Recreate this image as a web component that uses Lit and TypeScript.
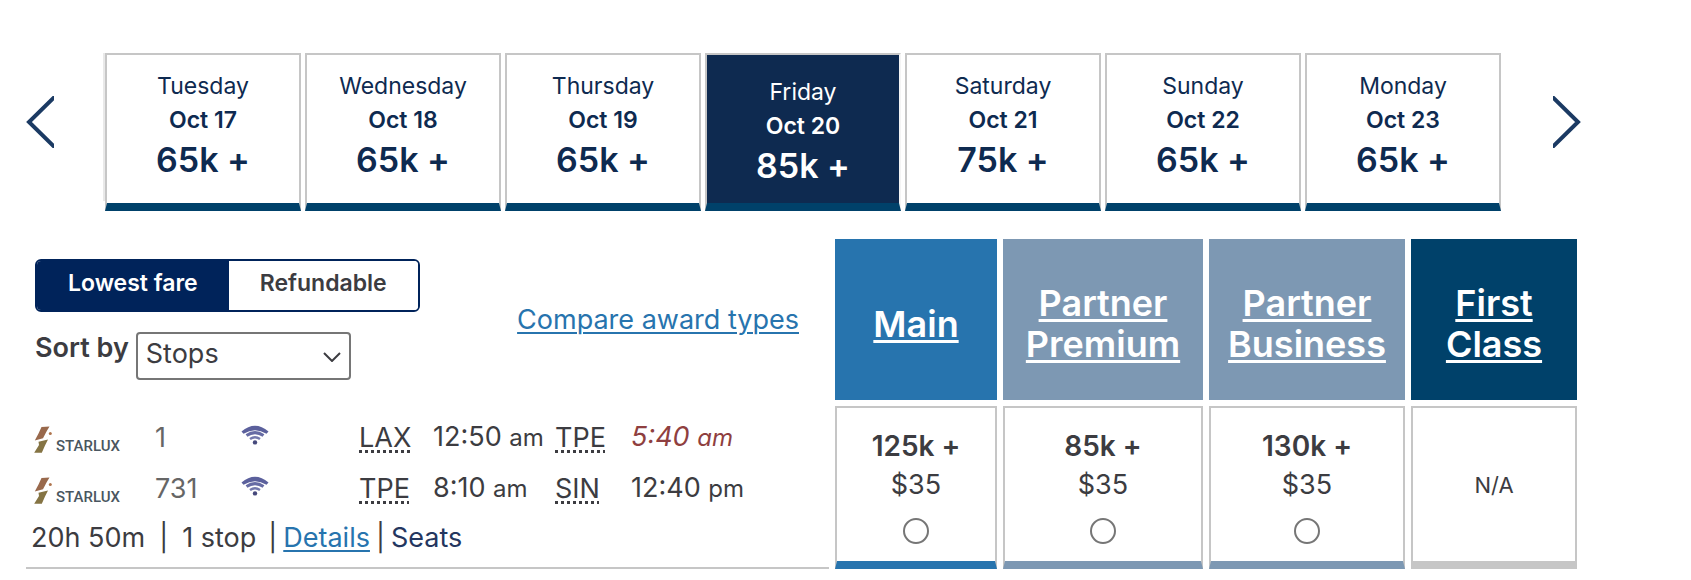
import { LitElement, html, css, svg } from "lit";
import { customElement, property, state } from "lit/decorators.js";
import { classMap } from "lit/directives/class-map.js";

interface Day { name: string; date: string; miles: string }
interface Fare { id: string; lines: string[]; miles?: string; fee?: string }
interface Stop { code: string; time: string; half: string; late?: boolean }
interface Segment { flight: string; from: Stop; to: Stop }

const DAYS: Day[] = [
  { name: "Tuesday", date: "Oct 17", miles: "65k +" },
  { name: "Wednesday", date: "Oct 18", miles: "65k +" },
  { name: "Thursday", date: "Oct 19", miles: "65k +" },
  { name: "Friday", date: "Oct 20", miles: "85k +" },
  { name: "Saturday", date: "Oct 21", miles: "75k +" },
  { name: "Sunday", date: "Oct 22", miles: "65k +" },
  { name: "Monday", date: "Oct 23", miles: "65k +" },
];

const FARES: Fare[] = [
  { id: "main", lines: ["Main"], miles: "125k +", fee: "$35" },
  { id: "premium", lines: ["Partner", "Premium"], miles: "85k +", fee: "$35" },
  { id: "business", lines: ["Partner", "Business"], miles: "130k +", fee: "$35" },
  { id: "first", lines: ["First", "Class"] },
];

const SEGMENTS: Segment[] = [
  {
    flight: "1",
    from: { code: "LAX", time: "12:50", half: "am" },
    to: { code: "TPE", time: "5:40", half: "am", late: true },
  },
  {
    flight: "731",
    from: { code: "TPE", time: "8:10", half: "am" },
    to: { code: "SIN", time: "12:40", half: "pm" },
  },
];

@customElement("day-strip")
class DayStrip extends LitElement {
  @property({ type: Number }) selected = 3;

  static styles = css`
    :host { display: flex; align-items: stretch; gap: 49px; }
    button { font: inherit; color: inherit; cursor: pointer; border-radius: 0; }
    .arrow { flex: none; display: flex; align-items: center; border: 0; background: none; padding: 0 0 20px; }
    .arrow svg { display: block; width: 28px; height: 52px; fill: none; stroke: #1b3a63; stroke-width: 4; }
    .days {
      flex: 1; display: grid; grid-template-columns: repeat(7, minmax(0, 1fr)); gap: 4px;
      margin: 0 3px 0 0; padding: 0 0 0 2px; list-style: none;
      background: linear-gradient(#e9e9e9, #e9e9e9) 0 0 / 2px 148px no-repeat;
    }
    .day {
      box-sizing: border-box; width: 100%; height: 158px; padding: 14px 0 0;
      display: flex; flex-direction: column; align-items: center;
      background: #fff; border: 2px solid #c6c6c6; border-bottom: 8px solid #00416a;
      color: #0e2a50; font-size: 23px; line-height: 34px;
    }
    .day.on { background: #0e2a50; color: #fff; padding-top: 20px; border-right-color: #f4f4f4; }
    .date { font-weight: 600; }
    .miles { font-size: 34px; line-height: 46px; font-weight: 600; }
  `;

  render() {
    return html`
      <button class="arrow" aria-label="Earlier dates">
        <svg viewBox="0 0 28 52"><path d="M29 0.5 3 26 29 51.5" /></svg>
      </button>
      <ul class="days">
        ${DAYS.map((d, i) => html`<li>
          <button class=${classMap({ day: true, on: i === this.selected })}
            aria-pressed=${i === this.selected ? "true" : "false"} @click=${() => (this.selected = i)}>
            <span>${d.name}</span><span class="date">${d.date}</span><span class="miles">${d.miles}</span>
          </button></li>`)}
      </ul>
      <button class="arrow" aria-label="Later dates">
        <svg viewBox="0 0 28 52"><path d="M-1 0.5 25 26 -1 51.5" /></svg>
      </button>`;
  }
}

const wifi = svg`<svg class="wifi" viewBox="0 0 28 20" role="img" aria-label="Wi-Fi available">
  <path d="M0.5 6.5Q14 -5 27.5 6.5L25.5 8.8Q14 1.8 2.5 8.8Z" fill="#5b609c" />
  <path d="M5.5 10.6Q14 4.6 22.5 10.6" fill="none" stroke="#666ba4" stroke-width="3" />
  <path d="M9 14Q14 10.4 19 14" fill="none" stroke="#7479ad" stroke-width="2.4" />
  <circle cx="14" cy="17.4" r="2.2" fill="#46497c" /></svg>`;

const mark = svg`<svg class="mark" viewBox="0 0 18 27" aria-hidden="true">
  <path d="M7.5 1 15.5 0.5 12.8 5 9 12.2 0.8 14.5 4.5 7.5Z" fill="#99694c" />
  <path d="M4.5 15.8 14 13.5 11 19.5 7.8 26.8 0.2 26.8 5 19Z" fill="#857444" />
  <circle cx="16.3" cy="7.4" r="1.5" fill="#b0764f" /></svg>`;

@customElement("flight-segments")
class FlightSegments extends LitElement {
  static styles = css`
    :host { display: block; }
    .segment {
      display: grid; grid-template-columns: 121px 86px 118px 74px 122px 76px auto;
      justify-content: start; align-items: center; height: 51px; padding-left: 8px;
      font-size: 27px; line-height: 34px; white-space: nowrap;
    }
    .logo { display: flex; align-items: flex-end; gap: 4px; padding-top: 4px; }
    .mark { display: block; width: 18px; height: 27px; }
    .brand { font: 500 15px/13px Roboto, sans-serif; color: #4a5660; }
    .number { color: #666; }
    .signal { padding-bottom: 6px; }
    .wifi { display: block; width: 28px; height: 20px; }
    abbr { text-decoration: underline dotted 3px; text-underline-offset: 3px; text-decoration-skip-ink: none; }
    .half { font-size: 24px; }
    .late { color: #8f3f40; font-style: italic; }
  `;

  private stop(s: Stop) {
    return html`<span><abbr title="Airport ${s.code}">${s.code}</abbr></span>
      <span class=${classMap({ late: !!s.late })}>${s.time} <span class="half">${s.half}</span></span>`;
  }

  render() {
    return SEGMENTS.map((s) => html`<div class="segment">
      <span class="logo">${mark}<span class="brand">STARLUX</span></span>
      <span class="number">${s.flight}</span>
      <span class="signal">${wifi}</span>
      ${this.stop(s.from)}${this.stop(s.to)}
    </div>`);
  }
}

@customElement("fare-table")
class FareTable extends LitElement {
  @state() private mode = "Lowest fare";

  static styles = css`
    :host { display: block; margin: 22px -2px 0 -6px; color: #3c3c41; }
    table { width: 100%; table-layout: fixed; border-collapse: separate; border-spacing: 6px; }
    th, td { padding: 0; box-sizing: border-box; }
    .col-main { width: 162px; }
    .col-premium { width: 200px; }
    .col-business { width: 196px; }
    .col-first { width: 166px; }

    .tools { height: 161px; text-align: left; vertical-align: top; font-weight: 400; }
    .bar { display: flex; justify-content: space-between; padding: 20px 30px 0 9px; }
    .toggle {
      display: inline-flex; box-sizing: border-box; height: 53px;
      border: 2px solid #00235a; border-radius: 6px; overflow: hidden;
    }
    .toggle button {
      padding: 0 31px 6px; border: 0; background: #fff; color: inherit; cursor: pointer;
      font: inherit; font-size: 23px; font-weight: 600; white-space: nowrap;
    }
    .toggle button.on { background: #00235a; color: #fff; }
    .sort { display: flex; align-items: flex-start; gap: 7px; margin-top: 20px; }
    label { font-size: 27px; line-height: 32px; font-weight: 600; }
    .picker { position: relative; }
    select {
      appearance: none; box-sizing: border-box; width: 215px; height: 48px; padding: 0 40px 6px 8px;
      border: 2px solid #767676; border-radius: 4px; background: #fff; color: inherit;
      font: inherit; font-size: 27px;
    }
    .caret { position: absolute; right: 10px; top: 20px; width: 18px; height: 10px; fill: none; stroke: #3c3c41; stroke-width: 2; pointer-events: none; }
    .link { color: #2774ae; text-decoration: underline 2px; text-underline-offset: 3px; }
    .compare { margin-top: 44px; font-size: 27px; line-height: 34px; white-space: nowrap; }

    .fare { height: 161px; padding-top: 9px; vertical-align: middle; }
    .fare a { color: #fff; font-size: 36px; line-height: 41px; font-weight: 600; text-decoration: underline 3px; text-underline-offset: 3px; }
    .fare.main { background: #2774ae; }
    .fare.premium, .fare.business { background: #7d98b3; }
    .fare.first { background: #00416a; }

    .trip { vertical-align: top; border-bottom: 2px solid #c6c6c6; padding-top: 6px; }
    .summary { display: flex; align-items: center; height: 46px; padding-left: 5px; font-size: 27px; white-space: nowrap; }
    .wide { margin: 0 14px; }
    .after { margin: 0 6px 0 12px; }
    .tight { margin: 0 6px; }
    .seats { color: #24365f; text-decoration: none; }

    .price { height: 163px; text-align: center; vertical-align: middle; border: 2px solid #c6c6c6; border-bottom-width: 8px; }
    .price.main { border-bottom-color: #2774ae; }
    .price.premium, .price.business { border-bottom-color: #7d98b3; }
    .price label { display: flex; flex-direction: column; align-items: center; font-weight: 400; line-height: 38px; }
    .miles { font-size: 28px; line-height: 40px; font-weight: 600; }
    .none { font-size: 22px; }
    input {
      appearance: none; box-sizing: border-box; width: 26px; height: 26px; margin: 14px 0 0;
      border: 2px solid #767676; border-radius: 50%; background: #fff;
    }
    input:checked { background: radial-gradient(#2774ae 50%, #fff 55%); }
  `;

  render() {
    return html`<table>
      <colgroup><col />${FARES.map((f) => html`<col class="col-${f.id}" />`)}</colgroup>
      <thead><tr>
        <td class="tools"><div class="bar">
          <div>
            <div class="toggle">
              ${["Lowest fare", "Refundable"].map((m) => html`<button class=${classMap({ on: m === this.mode })}
                aria-pressed=${m === this.mode ? "true" : "false"} @click=${() => (this.mode = m)}>${m}</button>`)}
            </div>
            <div class="sort">
              <label for="sort">Sort by</label>
              <div class="picker">
                <select id="sort"><option>Stops</option></select>
                <svg class="caret" viewBox="0 0 18 10"><path d="M1 1 9 9 17 1" /></svg>
              </div>
            </div>
          </div>
          <div class="compare"><a class="link" href="#awards">Compare award types</a></div>
        </div></td>
        ${FARES.map((f) => html`<th class="fare ${f.id}" scope="col">
          <a href="#${f.id}">${f.lines.map((l, i) => html`${i ? html`<br />` : ""}${l}`)}</a></th>`)}
      </tr></thead>
      <tbody><tr>
        <td class="trip">
          <flight-segments></flight-segments>
          <div class="summary">
            <span>20h 50m</span><span class="wide">|</span><span>1 stop</span><span class="after">|</span>
            <a class="link" href="#details">Details</a><span class="tight">|</span>
            <a class="seats" href="#seats">Seats</a>
          </div>
        </td>
        ${FARES.map((f) => html`<td class="price ${f.id}">${f.miles
          ? html`<label><span class="miles">${f.miles}</span><span>${f.fee}</span><input type="radio" name="fare" /></label>`
          : html`<span class="none">N/A</span>`}</td>`)}
      </tr></tbody>
    </table>`;
  }
}

@customElement("app-root")
class AppRoot extends LitElement {
  static styles = css`
    :host { display: block; background: #fff; font-family: Inter, "Liberation Sans", sans-serif; }
    main { padding: 53px 110px 0 26px; }
  `;

  render() {
    return html`<main><day-strip></day-strip><fare-table></fare-table></main>`;
  }
}
